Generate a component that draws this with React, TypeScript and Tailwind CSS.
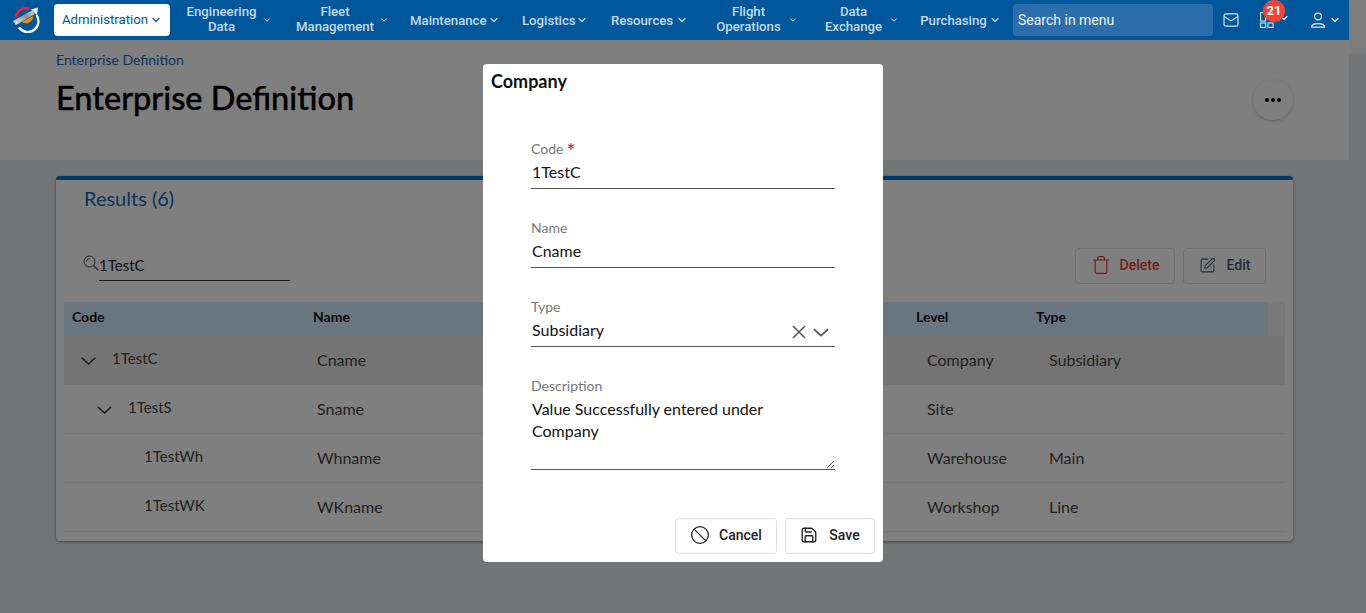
import { Ban, ChevronDown, Save, SquarePen, Trash } from "lucide-react";

const latoFont = "font-['Lato','Noto_Sans',sans-serif]";

type NavEntry = {
  lines: string[];
  width: string;
  gap: string;
  chevron: string;
};

const navEntries: NavEntry[] = [
  { lines: ["Engineering", "Data"], width: "w-[71px]", gap: "ml-[16px]", chevron: "ml-[5px] h-[10px] w-[10px]" },
  { lines: ["Fleet", "Management"], width: "w-[78px]", gap: "ml-[24px]", chevron: "ml-[5px] h-[10px] w-[10px]" },
  { lines: ["Maintenance"], width: "w-[76px]", gap: "ml-[21px]", chevron: "ml-[2px] h-[12px] w-[12px]" },
  { lines: ["Logistics"], width: "w-[52px]", gap: "ml-[22px]", chevron: "ml-[2px] h-[12px] w-[12px]" },
  { lines: ["Resources"], width: "w-[64px]", gap: "ml-[22px]", chevron: "ml-[2px] h-[12px] w-[12px]" },
  { lines: ["Flight", "Operations"], width: "w-[65px]", gap: "ml-[28px]", chevron: "ml-[7px] h-[10px] w-[10px]" },
  { lines: ["Data", "Exchange"], width: "w-[59px]", gap: "ml-[26px]", chevron: "ml-[6px] h-[10px] w-[10px]" },
  { lines: ["Purchasing"], width: "w-[67px]", gap: "ml-[21px]", chevron: "ml-[2px] h-[12px] w-[12px]" },
];

const rows = [
  { code: "1TestC", name: "Cname", level: "Company", type: "Subsidiary", indent: "pl-[17px]", open: true, active: true },
  { code: "1TestS", name: "Sname", level: "Site", type: "", indent: "pl-[33px]", open: true, active: false },
  { code: "1TestWh", name: "Whname", level: "Warehouse", type: "Main", indent: "pl-[80px]", open: false, active: false },
  { code: "1TestWK", name: "WKname", level: "Workshop", type: "Line", indent: "pl-[80px]", open: false, active: false },
];

function Logo() {
  return (
    <svg viewBox="0 0 28 28" className="ml-[12px] h-[28px] w-[28px] shrink-0" aria-hidden>
      <defs>
        <linearGradient id="logoBand" x1="0" y1="1" x2="1" y2="0">
          <stop offset="0" stopColor="#f4f4f4" />
          <stop offset="0.6" stopColor="#8f8f8f" />
          <stop offset="1" stopColor="#d8d8d8" />
        </linearGradient>
      </defs>
      <path d="M4 11 A10.5 10.5 0 0 1 17 2.5" fill="none" stroke="#e8203a" strokeWidth="2.6" />
      <path d="M7 21.5 A10.5 10.5 0 0 0 24.5 9" fill="none" stroke="#ffffff" strokeWidth="2.2" />
      <path d="M10 16 A7 7 0 0 0 21 10 Z" fill="#f58a07" />
      <path d="M1 15 L20 4.5 L23 8 L4 19 Z" fill="url(#logoBand)" />
      <path d="M19 3.5 L26 1.5 L25 9 Z" fill="#f2f2f2" />
    </svg>
  );
}

function TightChevron({ className }: { className: string }) {
  return (
    <svg viewBox="0 0 15 8" className={className} fill="none" stroke="currentColor" strokeWidth="1.6" aria-hidden>
      <path d="M0.8 0.8 L7.5 7 L14.2 0.8" />
    </svg>
  );
}

function NavItem({ entry }: { entry: NavEntry }) {
  return (
    <div className={`flex shrink-0 items-center ${entry.gap}`}>
      <span
        className={`${entry.width} ${
          entry.lines.length > 1 ? "mb-[2px]" : ""
        } text-center text-[13.2px] leading-[15px] font-medium text-[#c6d9ee]`}
      >
        {entry.lines.map((line) => (
          <span key={line} className="block whitespace-nowrap">
            {line}
          </span>
        ))}
      </span>
      <ChevronDown className={`${entry.chevron} text-[#c6d9ee]`} strokeWidth={2.4} />
    </div>
  );
}

function TopNav() {
  return (
    <nav className="relative z-20 flex h-[40px] w-[1349px] items-center bg-[#01579b] font-['Roboto',sans-serif]">
      <Logo />
      <div className="ml-[14px] flex h-[32px] w-[116px] shrink-0 items-center justify-center rounded-[4px] bg-white text-[13.2px] text-[#01579b]">
        Administration
        <ChevronDown className="ml-[2px] h-[12px] w-[12px]" strokeWidth={2.4} />
      </div>
      {navEntries.map((entry) => (
        <NavItem key={entry.lines[0]} entry={entry} />
      ))}
      <div className="ml-[12px] flex h-[32px] w-[200px] shrink-0 items-center rounded-[4px] bg-[#2b6eab] pl-[5px] text-[14px] text-[#eef4fa]">
        Search in menu
      </div>
      <svg viewBox="0 0 18 16" className="ml-[9px] h-[14px] w-[18px] shrink-0 text-[#dbe7f3]" fill="none" stroke="currentColor" strokeWidth="1.3" aria-hidden>
        <rect x="1" y="1" width="16" height="14" rx="2" />
        <path d="M1 4 L9 9 L17 4" />
      </svg>
      <div className="relative ml-[20px] flex h-[16px] w-[30px] shrink-0 items-start">
        <svg viewBox="0 0 14 16" className="h-[16px] w-[14px] text-[#c6d9ee]" fill="none" stroke="currentColor" strokeWidth="1.2" aria-hidden>
          <rect x="0.6" y="0.6" width="5" height="8.5" />
          <rect x="0.6" y="11" width="5" height="4.4" />
          <rect x="8" y="11" width="5" height="4.4" />
        </svg>
        <ChevronDown className="absolute top-0 left-[18px] h-[12px] w-[12px] text-[#dbe7f3]" strokeWidth={2.4} />
        <span className="absolute top-[-12px] left-[3px] flex h-[22px] w-[22px] items-center justify-center rounded-full bg-[#f44336] text-[13px] font-bold text-white">
          21
        </span>
      </div>
      <svg viewBox="0 0 16 16" className="ml-[20px] h-[16px] w-[16px] shrink-0 text-[#dbe7f3]" fill="none" stroke="currentColor" strokeWidth="1.2" aria-hidden>
        <circle cx="8" cy="4.5" r="3.4" />
        <path d="M1.5 15.2 C1.5 10.5 14.5 10.5 14.5 15.2 Z" />
      </svg>
      <ChevronDown className="ml-[3px] h-[12px] w-[12px] text-[#dbe7f3]" strokeWidth={2.4} />
    </nav>
  );
}

function PageHeader() {
  return (
    <header className="flex h-[120px] items-start justify-between bg-white pt-[11px] pr-[56px] pl-[56px]">
      <div>
        <p className="text-[14px] leading-[18px] text-[#1565c0]">Enterprise Definition</p>
        <h1 className="mt-[9px] text-[32.5px] leading-[40px] font-medium text-black [-webkit-text-stroke:0.4px_black]">
          Enterprise Definition
        </h1>
      </div>
      <div className="mt-[29px] flex h-[40px] w-[40px] items-center justify-center rounded-full bg-white shadow-[0_1px_3px_rgba(0,0,0,0.25)]">
        <span className="flex gap-[2px]">
          <span className="h-[4px] w-[4px] rounded-full bg-black" />
          <span className="h-[4px] w-[4px] rounded-full bg-black" />
          <span className="h-[4px] w-[4px] rounded-full bg-black" />
        </span>
      </div>
    </header>
  );
}

function ResultsCard() {
  return (
    <section className="mx-[56px] mt-[16px] h-[365px] rounded-[4px] border-t-[4px] border-[#0072c6] bg-white px-[8px] shadow-[0_1px_3px_rgba(0,0,0,0.45)]">
      <h2 className="mt-[6px] pl-[20px] text-[20px] leading-[24px] text-[#0a6ab0]">Results (6)</h2>
      <div className="mt-[38px] flex h-[46px] items-start justify-between pr-[19px]">
        <div className="mt-[3px] flex w-[227px] items-start pl-[19px]">
          <svg viewBox="0 0 16 16" className="mt-[4px] h-[16px] w-[16px] shrink-0 text-[#555]" fill="none" stroke="currentColor" strokeWidth="1" aria-hidden>
            <circle cx="6.5" cy="6.5" r="5.5" />
            <path d="M3.5 6.5 A3 3 0 0 1 6.5 3.5" />
            <path d="M10.5 10.5 L15 15" strokeWidth="1.5" />
          </svg>
          <div className="h-[30px] w-[191px] border-b border-[#333] text-[15px] leading-[28px] text-[#222]">1TestC</div>
        </div>
        <div className="flex gap-[8px] font-['Roboto',sans-serif] text-[14px] font-medium">
          <button type="button" className="flex h-[36px] w-[100px] items-center justify-center gap-[9px] rounded-[4px] border border-[#dedede] pb-[2px] text-[#e53935]">
            <Trash className="h-[20px] w-[20px]" strokeWidth={1.4} />
            Delete
          </button>
          <button type="button" className="flex h-[36px] w-[83px] items-center justify-center gap-[11px] rounded-[4px] border border-[#dedede] pb-[2px] text-[#4b5563]">
            <SquarePen className="h-[17px] w-[17px]" strokeWidth={1.5} />
            Edit
          </button>
        </div>
      </div>
      <div className="mt-[8px] flex h-[34px] bg-[#f2f2f2] text-[14px] font-bold text-[#111]">
        <div className="grid w-[1204px] grid-cols-[241px_603px_120px_232px] items-center bg-[#d2ecff] pb-[5px] pl-[8px]">
          <span>Code</span>
          <span>Name</span>
          <span>Level</span>
          <span>Type</span>
        </div>
      </div>
      {rows.map((row) => (
        <div
          key={row.code}
          className={`grid h-[49px] grid-cols-[253px_610px_122px_236px] items-center border-b border-[#eeeeee] text-[16px] text-[#444] ${
            row.active ? "bg-[#e8e8e8]" : ""
          }`}
        >
          <div className={`flex items-center ${row.indent}`}>
            {row.open ? <TightChevron className="mt-[2px] mr-[16px] h-[8px] w-[15px] text-[#444]" /> : null}
            <span className="mb-[4px] text-[15px]">{row.code}</span>
          </div>
          <span>{row.name}</span>
          <span>{row.level}</span>
          <span>{row.type}</span>
        </div>
      ))}
    </section>
  );
}

function FieldLabel({ text, required }: { text: string; required?: boolean }) {
  return (
    <div className="h-[19px] text-[14px] leading-[19px] text-[#777]">
      {text}
      {required ? <span className="ml-[3px] align-[-5px] text-[21px] leading-[14px] text-[#a51d3e]">*</span> : null}
    </div>
  );
}

function TextField({ label, value, required }: { label: string; value: string; required?: boolean }) {
  return (
    <div className="h-[79px] w-[304px]">
      <FieldLabel text={label} required={required} />
      <div className="flex h-[31px] items-start border-b border-[#555] pt-[3px] pl-[1px] text-[16px] leading-[22px] text-[#111]">
        {value}
      </div>
    </div>
  );
}

function CompanyModal() {
  return (
    <div className={`absolute top-[64px] left-[483px] z-40 h-[498px] w-[400px] rounded-[4px] bg-white ${latoFont}`}>
      <h3 className="pt-[6px] pl-[8px] text-[18px] leading-[22px] font-bold text-[#111]">Company</h3>
      <div className="mt-[47px] pl-[48px]">
        <TextField label="Code" value="1TestC" required />
        <TextField label="Name" value="Cname" />
        <div className="h-[79px] w-[304px]">
          <FieldLabel text="Type" />
          <div className="flex h-[31px] items-start justify-between border-b border-[#555] pt-[3px] pl-[1px] text-[16px] leading-[22px] text-[#111]">
            Subsidiary
            <span className="flex items-center gap-[7px] pt-[6px] pr-[6px] text-[#555]">
              <svg viewBox="0 0 14 14" className="h-[14px] w-[14px]" fill="none" stroke="currentColor" strokeWidth="1.5" aria-hidden>
                <path d="M1 1 L13 13 M13 1 L1 13" />
              </svg>
              <TightChevron className="h-[9px] w-[16px]" />
            </span>
          </div>
        </div>
        <div className="w-[304px]">
          <FieldLabel text="Description" />
          <div className="relative h-[75px] border-b border-[#555] pl-[1px] text-[16px] leading-[22px] text-[#111]">
            <p className="w-[260px] pt-[3px]">Value Successfully entered under Company</p>
            <svg viewBox="0 0 9 9" className="absolute right-0 bottom-0 h-[9px] w-[9px] text-[#555]" fill="none" stroke="currentColor" strokeWidth="1" aria-hidden>
              <path d="M1 8 L8 1 M5 8 L8 5" />
            </svg>
          </div>
        </div>
      </div>
      <div className="mt-[48px] flex justify-end gap-[8px] pr-[8px] font-['Roboto',sans-serif] text-[14px] font-medium text-[#222]">
        <button type="button" className="flex h-[36px] w-[102px] items-center justify-center gap-[9px] rounded-[4px] border border-[#dedede] pb-[2px]">
          <Ban className="h-[20px] w-[20px]" strokeWidth={1.5} />
          Cancel
        </button>
        <button type="button" className="flex h-[36px] w-[90px] items-center justify-center gap-[11px] rounded-[4px] border border-[#dedede] pb-[2px]">
          <Save className="h-[18px] w-[18px]" strokeWidth={1.8} />
          Save
        </button>
      </div>
    </div>
  );
}

export default function App() {
  return (
    <div className={`relative h-[613px] w-[1366px] overflow-hidden bg-[#e6e8ec] ${latoFont}`}>
      <TopNav />
      <div className="w-[1349px]">
        <PageHeader />
        <ResultsCard />
      </div>
      <div className="absolute top-0 right-0 h-[54px] w-[17px] bg-[#f8f8f8]" />
      <div className="absolute inset-0 z-10 bg-black/50" />
      <CompanyModal />
    </div>
  );
}
